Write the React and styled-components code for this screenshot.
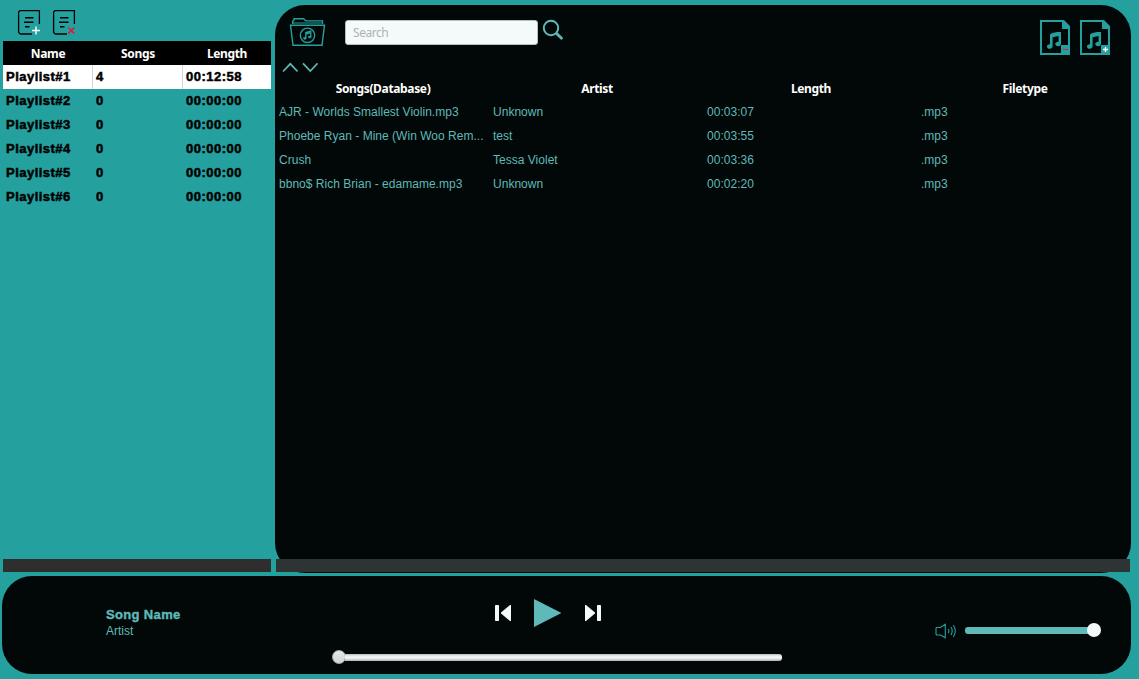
import React from "react";
import styled, { createGlobalStyle } from "styled-components";

const teal = "#24a19f";
const aqua = "#5fb9b9";
const ink = "#020807";

const GlobalStyle = createGlobalStyle`
  * { box-sizing: border-box; }
  body { margin: 0; background: ${teal}; font: 12px "Liberation Sans", Arial, sans-serif; }
  button { background: none; border: 0; padding: 0; display: block; }
  svg { display: block; }
`;

const Window = styled.div`
  width: 1139px;
  height: 679px;
  background: ${teal};
  overflow: hidden;
  display: flex;
  flex-direction: column;
  gap: 3px;
`;

const Upper = styled.div`
  display: flex;
  height: 573px;
`;

const Sidebar = styled.aside`
  width: 275px;
  padding: 0 4px 1px 3px;
  display: flex;
  flex-direction: column;
`;

const SidebarTools = styled.div`
  height: 41px;
  padding: 9px 0 0 14px;
  display: flex;
  align-items: flex-start;
  gap: 10px;
`;

const PlaylistRow = styled.div`
  display: grid;
  grid-template-columns: 90px 90px 88px;
  height: 24px;
  line-height: 24px;
  background: ${(p) => (p.$selected ? "#fff" : "transparent")};
`;

const PlaylistHead = styled(PlaylistRow)`
  background: #000;
  padding-top: 1px;
`;

const HeadCell = styled.div`
  color: #fff;
  text-align: center;
  font: bold 12px/24px "Noto Sans", "Open Sans", sans-serif;
  letter-spacing: -0.35px;
`;

const PlaylistCell = styled.div`
  padding-left: 3px;
  font-size: 13px;
  font-weight: bold;
  letter-spacing: 0.48px;
  -webkit-text-stroke: 0.5px #000;
  border-right: 1px solid ${(p) => (p.$divider ? "#d4d4d4" : "transparent")};
`;

const ScrollStrip = styled.div`
  height: 13px;
  margin-top: auto;
  flex-shrink: 0;
  background: ${(p) => p.$color};
`;

const Library = styled.main`
  width: 856px;
  margin-top: 5px;
  padding: 0 1px 1px;
  border-radius: 30px;
  background: ${ink};
  display: flex;
  flex-direction: column;
`;

const LibraryTools = styled.div`
  height: 53px;
  padding: 11px 20px 0 13px;
  display: flex;
  align-items: flex-start;
`;

const FolderButton = styled.button`
  margin: 1px 19px 0 0;
`;

const SearchField = styled.input`
  width: 193px;
  height: 25px;
  margin: 4px 4px 0 0;
  padding: 0 7px;
  border: 1px solid #b9bfbf;
  border-radius: 3px;
  background: #f4fafa;
  font: 12px "Noto Sans", "Open Sans", sans-serif;
  letter-spacing: -0.45px;
  outline: 0;
  &::placeholder { color: #aeb2b3; opacity: 1; }
`;

const SearchButton = styled.button`
  margin-top: 3px;
`;

const FileButtons = styled.div`
  display: flex;
  gap: 10px;
  margin: 4px 0 0 auto;
`;

const SortButtons = styled.div`
  display: flex;
  align-items: flex-start;
  gap: 4px;
  height: 19px;
  padding: 4px 0 0 6px;
`;

const SongRow = styled.div`
  display: grid;
  grid-template-columns: repeat(4, 214px);
  height: 24px;
`;

const SongHead = styled(SongRow)`
  height: 23px;
`;

const SongCell = styled.div`
  padding-left: 3px;
  line-height: 24px;
  color: ${aqua};
  white-space: nowrap;
  letter-spacing: 0.02px;
`;

const Player = styled.footer`
  width: 1129px;
  height: 98px;
  margin-left: 2px;
  border-radius: 30px;
  background: ${ink};
  display: grid;
  grid-template-columns: 330px 450px 1fr;
`;

const NowPlaying = styled.div`
  padding: 31px 0 0 104px;
  color: ${aqua};
  line-height: 16px;
`;

const SongName = styled.div`
  font-size: 13px;
  font-weight: bold;
  letter-spacing: 0.35px;
  -webkit-text-stroke: 0.4px ${aqua};
`;

const Transport = styled.div`
  display: flex;
  flex-direction: column;
`;

const Controls = styled.div`
  height: 74px;
  padding-left: 163px;
  display: flex;
  align-items: center;
`;

const ControlButton = styled.button`
  margin-right: ${(p) => p.$gap || 0}px;
`;

const SeekBar = styled.div`
  height: 14px;
  display: flex;
  align-items: center;
`;

const SeekThumb = styled.div`
  width: 14px;
  height: 14px;
  border-radius: 50%;
  border: 1px solid #a9adad;
  background: linear-gradient(#e6eaea, #cfd4d4);
`;

const SeekTrack = styled.div`
  flex: 1;
  height: 7px;
  margin-left: -1px;
  border-radius: 0 3px 3px 0;
  background: linear-gradient(#b4b9b8 0, #e4e9e8 25%, #f4f9f8 50%, #dfe4e3 68%, #aeb4b3 100%);
`;

const Volume = styled.div`
  height: 14px;
  margin: 47px 0 0 153px;
  display: flex;
  align-items: center;
`;

const VolumeIcon = styled.svg`
  margin-top: 2px;
`;

const VolumeTrack = styled.div`
  width: 124px;
  height: 7px;
  margin-left: 8px;
  border-radius: 3px 0 0 3px;
  background: ${aqua};
`;

const VolumeThumb = styled.div`
  width: 14px;
  height: 14px;
  margin-left: -2px;
  border-radius: 50%;
  background: #f4fafa;
`;

function PlaylistIcon({ remove }) {
  return (
    <svg width="25" height="27" viewBox="0 0 25 27" fill="none" strokeWidth="1.3">
      <path d="M15 25H3.5L1.6 23.5V3L3 1.6H22.4V15" stroke="#000" />
      <path d="M8 8.7h8.5M7 13.2h9.5M8 17.8h4.5" stroke="#000" strokeWidth="1.5" />
      {remove ? (
        <path d="M16.3 18.5l6 6M22.3 18.5l-6 6" stroke="#e0163a" strokeWidth="1.6" />
      ) : (
        <path d="M19 17.5v8M15 21.5h8" stroke="#fff" strokeWidth="1.4" />
      )}
    </svg>
  );
}

function FolderIcon() {
  return (
    <svg width="37" height="30" viewBox="0 0 37 30" fill="none" stroke={teal} strokeWidth="1.4">
      <path d="M3.7 7V4.5L5.2 2.5V1.7h9.5l2 2.2H33.5V7" />
      <path d="M4 6h28.5" strokeWidth="1" />
      <path d="M1.5 8.2H35.5L33 28.3H4L1.5 8.2z" />
      <circle cx="18.5" cy="18.3" r="7.2" />
      <path d="M16.8 21.2v-5.7l5-1.3v5.6M16.8 17l5-1.3" strokeWidth="1.3" />
      <ellipse cx="15.8" cy="21.3" rx="1.5" ry="1.1" fill={teal} strokeWidth=".5" />
      <ellipse cx="20.8" cy="20" rx="1.5" ry="1.1" fill={teal} strokeWidth=".5" />
    </svg>
  );
}

function FileIcon({ remove }) {
  return (
    <svg width="30" height="35" viewBox="0 0 30 35" fill={teal}>
      <path d="M0 0H24L30 6V35H0V0zM2 2V33H28V9H22V2z" fillRule="evenodd" />
      <rect x="21" y="25" width="9" height="10" />
      <path d="M10 14.4l2.3-1.4 5-1.1H21V23.6c0 1.6-1.1 2.6-2.8 2.6-1.8 0-2.9-.8-2.9-2.1 0-1.4 1.2-2.3 3.3-2.3v-5.9l-6 1.3v8.6c0 1.8-1.1 3-2.8 3-1.7 0-2.8-.8-2.8-2.3 0-1.5 1.2-2.3 3-2.3V14.4z" />
      {remove ? (
        <path d="M23 29.5h5" stroke="#c22c54" strokeWidth="1.2" />
      ) : (
        <path d="M23 29.5h5M25.5 27v5" stroke="#fff" strokeWidth="1.3" />
      )}
    </svg>
  );
}

function SkipIcon({ flip }) {
  return (
    <svg width="16" height="16" viewBox="0 0 16 16" fill="#f4fafa">
      <g transform={flip ? "translate(16 0) scale(-1 1)" : undefined}>
        <rect x="0" y="0" width="4" height="16" rx=".8" />
        <path d="M16 0V16H15L6 8.5V7.5L15 0z" />
      </g>
    </svg>
  );
}

function Chevron({ down }) {
  return (
    <svg width="16" height="11" viewBox="0 0 16 11" fill="none" stroke={aqua} strokeWidth="1.7">
      <path d={down ? "M1 1.3l7.3 7.7 7.3-7.7" : "M1 9.5l7.3-7.7 7.3 7.7"} />
    </svg>
  );
}

const playlists = [
  ["Playlist#1", "4", "00:12:58"],
  ["Playlist#2", "0", "00:00:00"],
  ["Playlist#3", "0", "00:00:00"],
  ["Playlist#4", "0", "00:00:00"],
  ["Playlist#5", "0", "00:00:00"],
  ["Playlist#6", "0", "00:00:00"],
];

const songs = [
  ["AJR - Worlds Smallest Violin.mp3", "Unknown", "00:03:07", ".mp3"],
  ["Phoebe Ryan - Mine (Win Woo Rem...", "test", "00:03:55", ".mp3"],
  ["Crush", "Tessa Violet", "00:03:36", ".mp3"],
  ["bbno$ Rich Brian - edamame.mp3", "Unknown", "00:02:20", ".mp3"],
];

export default function App() {
  return (
    <>
      <GlobalStyle />
      <Window>
        <Upper>
          <Sidebar>
            <SidebarTools>
              <button><PlaylistIcon /></button>
              <button><PlaylistIcon remove /></button>
            </SidebarTools>
            <PlaylistHead>
              {["Name", "Songs", "Length"].map((t) => <HeadCell key={t}>{t}</HeadCell>)}
            </PlaylistHead>
            {playlists.map((row, i) => (
              <PlaylistRow key={row[0]} $selected={i === 0}>
                {row.map((t, c) => (
                  <PlaylistCell key={c} $divider={i === 0 && c < 2}>{t}</PlaylistCell>
                ))}
              </PlaylistRow>
            ))}
            <ScrollStrip $color="#2e2e2e" />
          </Sidebar>
          <Library>
            <LibraryTools>
              <FolderButton><FolderIcon /></FolderButton>
              <SearchField placeholder="Search" />
              <SearchButton>
                <svg width="22" height="22" viewBox="0 0 22 22" fill="none" stroke={aqua}>
                  <circle cx="9" cy="9" r="7.2" strokeWidth="2" />
                  <path d="M14.3 14.3l6 5.7" strokeWidth="2.8" />
                </svg>
              </SearchButton>
              <FileButtons>
                <button><FileIcon remove /></button>
                <button><FileIcon /></button>
              </FileButtons>
            </LibraryTools>
            <SortButtons>
              <button><Chevron /></button>
              <button><Chevron down /></button>
            </SortButtons>
            <SongHead>
              {["Songs(Database)", "Artist", "Length", "Filetype"].map((t) => (
                <HeadCell key={t}>{t}</HeadCell>
              ))}
            </SongHead>
            {songs.map((row) => (
              <SongRow key={row[0]}>
                {row.map((t, c) => <SongCell key={c}>{t}</SongCell>)}
              </SongRow>
            ))}
            <ScrollStrip $color="#2e3333" />
          </Library>
        </Upper>
        <Player>
          <NowPlaying>
            <SongName>Song Name</SongName>
            <div>Artist</div>
          </NowPlaying>
          <Transport>
            <Controls>
              <ControlButton $gap={23}><SkipIcon /></ControlButton>
              <ControlButton $gap={24}>
                <svg width="27" height="28" viewBox="0 0 27 28"><path d="M0 0L27.5 14L0 28z" fill={aqua} /></svg>
              </ControlButton>
              <ControlButton><SkipIcon flip /></ControlButton>
            </Controls>
            <SeekBar><SeekThumb /><SeekTrack /></SeekBar>
          </Transport>
          <Volume>
            <VolumeIcon width="22" height="16" viewBox="0 0 22 16" fill="none" stroke={teal} strokeWidth="1.1">
              <path d="M1.5 4.5H5.5L10.3 1.2V14.8L5.5 12H1.5L1 11V5z" />
              <path d="M13.3 6q1.2 2 0 4M16 4q2.4 4 0 8M18.3 2q4 6 0 12" />
            </VolumeIcon>
            <VolumeTrack />
            <VolumeThumb />
          </Volume>
        </Player>
      </Window>
    </>
  );
}
